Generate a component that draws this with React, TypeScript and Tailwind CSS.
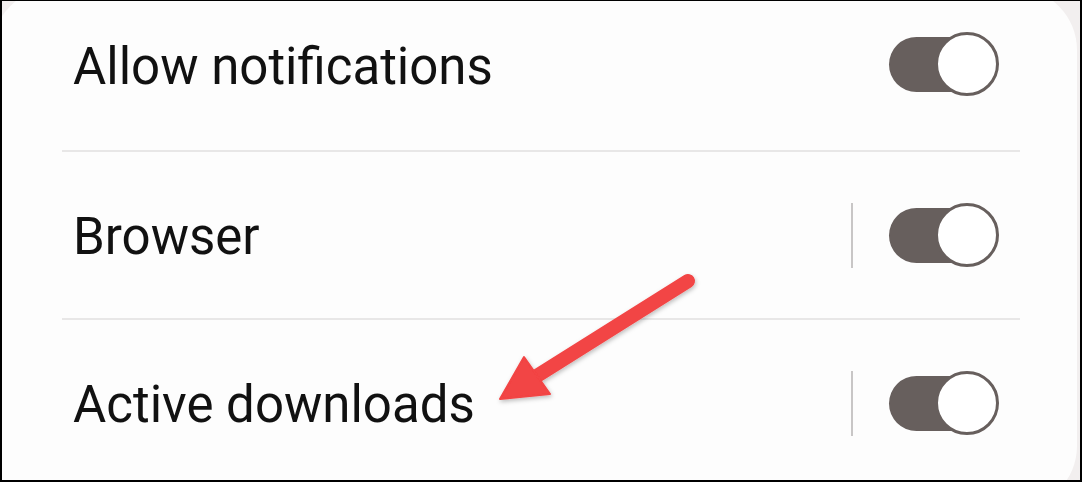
import React from "react";

const rows = [
  { label: "Allow notifications", divider: false },
  { label: "Browser", divider: true },
  { label: "Active downloads", divider: true },
];

function Toggle() {
  return (
    <div className="relative h-[64px] w-[110px] shrink-0">
      <div className="absolute left-0 top-[5px] h-[55px] w-[100px] rounded-full bg-[#675f5d]" />
      <div className="absolute right-0 top-0 h-[64px] w-[64px] rounded-full border-[3px] border-[#675f5d] bg-white" />
    </div>
  );
}

function Arrow() {
  return (
    <svg
      className="pointer-events-none absolute left-0 top-0"
      width="1082"
      height="482"
      viewBox="0 0 1082 482"
    >
      <defs>
        <filter id="sh" x="-20%" y="-20%" width="140%" height="140%">
          <feDropShadow dx="1" dy="2" stdDeviation="2" floodColor="#000" floodOpacity="0.25" />
        </filter>
      </defs>
      <g filter="url(#sh)" fill="#f24444" stroke="#f24444">
        <line x1="686" y1="280" x2="530" y2="378" strokeWidth="14" strokeLinecap="round" />
        <polygon points="498,398 522,356 548,393" strokeWidth="2" strokeLinejoin="round" />
      </g>
    </svg>
  );
}

export default function App() {
  return (
    <div
      className="relative h-[482px] w-[1082px] overflow-hidden border-b-2 border-l-2 border-r-2 border-t border-black bg-[#f2efef]"
      style={{ fontFamily: "Roboto, 'Noto Sans', sans-serif" }}
    >
      <div className="-ml-[10px] -mt-[13px] mr-[3px] h-[520px] rounded-[62px] bg-[#fdfdfd]">
        <div className="pl-[70px] pr-[57px]">
          {rows.map((r, i) => (
            <div key={r.label}>
              {i > 0 && <div className="h-[2px] bg-[#e8e7e7]" />}
              <div
                className={
                  i === 0
                    ? "flex h-[162px] items-center pb-[10px] pl-[11px] pr-[21px]"
                    : "flex h-[166px] items-center pl-[11px] pr-[21px]"
                }
              >
                <span
                  className={
                    i === 0
                      ? "mt-[5px] flex-1 text-[51px] leading-none text-[#111]"
                      : "mt-[2px] flex-1 text-[51px] leading-none text-[#111]"
                  }
                >
                  {r.label}
                </span>
                {r.divider && <div className="mr-[36px] h-[65px] w-[2px] bg-[#c8c6c6]" />}
                <Toggle />
              </div>
            </div>
          ))}
        </div>
      </div>
      <Arrow />
    </div>
  );
}
